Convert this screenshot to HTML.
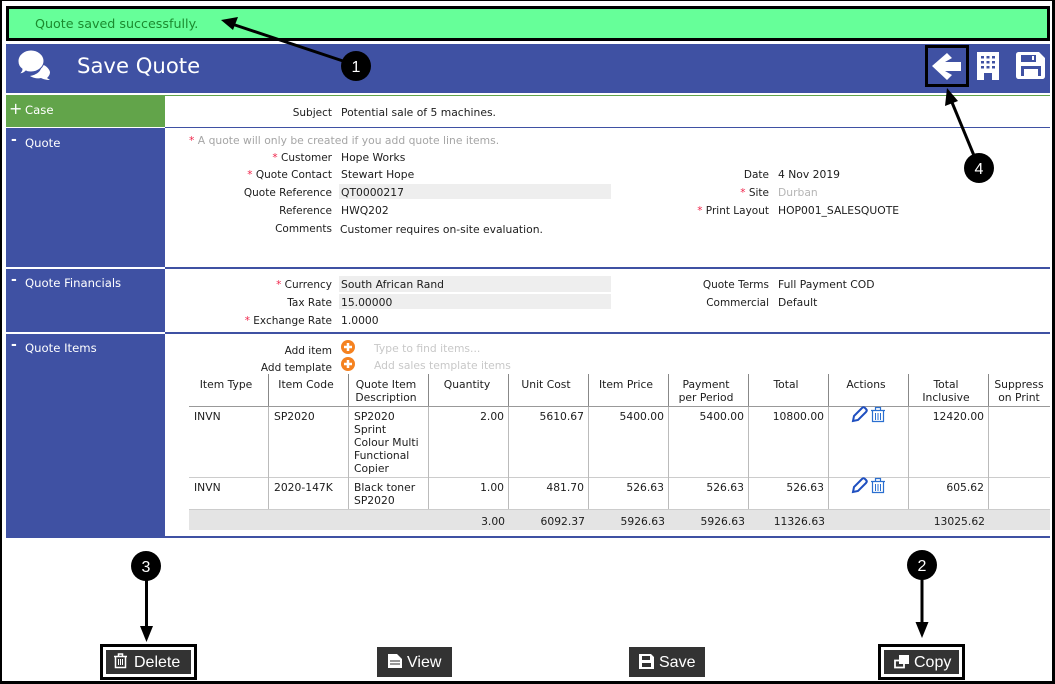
<!DOCTYPE html>
<html><head><meta charset="utf-8"><title>Save Quote</title>
<style>
html,body{margin:0;padding:0;background:#fff}
#p{position:relative;width:1055px;height:684px;overflow:hidden;background:#fff;font:10.75px/13px "DejaVu Sans",sans-serif;color:#1c1c1c}
#p div{position:absolute}
.t{white-space:nowrap}
.l{position:absolute;white-space:nowrap;text-align:right;width:300px;font-size:10.5px;margin-top:1px}
.l1{left:32px}
.l2{left:469px}
.v{position:absolute;white-space:nowrap}
.v1{left:341px}
.v2{left:778px}
.r{color:#f0244a}
.g{color:#b5b5b5}
.s{color:#fff;font-size:11.65px;white-space:nowrap}
.m{color:#fff;font-size:14px;font-weight:bold;white-space:nowrap}
.c{text-align:center;width:80px;white-space:nowrap}
.n{text-align:right;width:70px;white-space:nowrap}
.b{background:#333;color:#fff;font:16px/20px "Liberation Sans",sans-serif;white-space:nowrap}
</style></head><body><div id="p">
<div style="left:6px;top:6px;width:1038px;height:29px;background:#66ff99;border:3px solid #000"></div>
<div class="t" style="left:35px;top:17px;color:#1b8a2e;font-size:12.7px">Quote saved successfully.</div>
<div style="left:6px;top:44px;width:1044px;height:49px;background:#3f51a3"></div>
<div class="t" style="left:77px;top:53px;color:#fff;font-size:21.2px;line-height:26px">Save Quote</div>

<div style="left:6px;top:96px;width:159px;height:31px;background:#62a44a"></div>
<div style="left:6px;top:95px;width:1044px;height:1px;background:#62a44a"></div>
<div style="left:165px;top:127px;width:885px;height:1px;background:#3f51a3"></div>
<div style="left:6px;top:128px;width:159px;height:139px;background:#3f51a3"></div>
<div style="left:6px;top:267px;width:1044px;height:2px;background:#3f51a3"></div>
<div style="left:6px;top:269px;width:159px;height:63px;background:#3f51a3"></div>
<div style="left:6px;top:332px;width:1044px;height:2px;background:#3f51a3"></div>
<div style="left:6px;top:334px;width:159px;height:203px;background:#3f51a3"></div>
<div style="left:6px;top:536px;width:1044px;height:2px;background:#3f51a3"></div>
<div style="left:6px;top:267px;width:159px;height:2px;background:#fff"></div>
<div style="left:6px;top:332px;width:159px;height:2px;background:#fff"></div>

<div class="m" style="left:9px;top:102px;font-size:16px;font-weight:normal">+</div><div class="s" style="left:25px;top:104px">Case</div>
<div class="m" style="left:11px;top:134px">-</div><div class="s" style="left:25px;top:137px">Quote</div>
<div class="m" style="left:11px;top:274px">-</div><div class="s" style="left:25px;top:277px">Quote Financials</div>
<div class="m" style="left:11px;top:339px">-</div><div class="s" style="left:25px;top:342px">Quote Items</div>

<div style="left:339px;top:184px;width:272px;height:15px;background:#eee"></div>
<div style="left:339px;top:276px;width:272px;height:16px;background:#eee"></div>
<div style="left:339px;top:294px;width:272px;height:15px;background:#eee"></div>

<span class="l l1" style="top:106px">Subject</span><span class="v v1" style="top:106px">Potential sale of 5 machines.</span>
<span class="v" style="left:189px;top:134px;color:#a5a5a5"><span class="r">*</span> A quote will only be created if you add quote line items.</span>
<span class="l l1" style="top:151px"><span class="r">*</span> Customer</span><span class="v v1" style="top:151px">Hope Works</span>
<span class="l l1" style="top:168px"><span class="r">*</span> Quote Contact</span><span class="v v1" style="top:168px">Stewart Hope</span>
<span class="l l1" style="top:186px">Quote Reference</span><span class="v v1" style="top:186px">QT0000217</span>
<span class="l l1" style="top:204px">Reference</span><span class="v v1" style="top:204px">HWQ202</span>
<span class="l l1" style="top:222px">Comments</span><span class="v" style="left:340px;top:223px">Customer requires on-site evaluation.</span>
<span class="l l2" style="top:168px">Date</span><span class="v v2" style="top:168px">4 Nov 2019</span>
<span class="l l2" style="top:186px"><span class="r">*</span> Site</span><span class="v v2 g" style="top:186px">Durban</span>
<span class="l l2" style="top:204px"><span class="r">*</span> Print Layout</span><span class="v v2" style="top:204px">HOP001_SALESQUOTE</span>

<span class="l l1" style="top:278px"><span class="r">*</span> Currency</span><span class="v v1" style="top:278px">South African Rand</span>
<span class="l l1" style="top:296px">Tax Rate</span><span class="v v1" style="top:296px">15.00000</span>
<span class="l l1" style="top:314px"><span class="r">*</span> Exchange Rate</span><span class="v v1" style="top:314px">1.0000</span>
<span class="l l2" style="top:278px">Quote Terms</span><span class="v v2" style="top:278px">Full Payment COD</span>
<span class="l l2" style="top:296px">Commercial</span><span class="v v2" style="top:296px">Default</span>

<span class="l l1" style="top:344px">Add item</span><span class="l l1" style="top:361px">Add template</span>
<span class="v" style="left:374px;top:342px;color:#c8c8c8">Type to find items...</span>
<span class="v" style="left:374px;top:359px;color:#c8c8c8">Add sales template items</span>

<!-- table -->
<div style="left:189px;top:510px;width:861px;height:20px;background:#e4e4e4"></div>
<div style="left:189px;top:406px;width:861px;height:1px;background:#999"></div>
<div style="left:189px;top:477px;width:861px;height:1px;background:#ccc"></div>
<div style="left:189px;top:509px;width:861px;height:1px;background:#ccc"></div>
<div style="left:268px;top:374px;width:1px;height:32px;background:#888"></div><div style="left:268px;top:407px;width:1px;height:102px;background:#bbb"></div>
<div style="left:348px;top:374px;width:1px;height:32px;background:#888"></div><div style="left:348px;top:407px;width:1px;height:102px;background:#bbb"></div>
<div style="left:428px;top:374px;width:1px;height:32px;background:#888"></div><div style="left:428px;top:407px;width:1px;height:102px;background:#bbb"></div>
<div style="left:508px;top:374px;width:1px;height:32px;background:#888"></div><div style="left:508px;top:407px;width:1px;height:102px;background:#bbb"></div>
<div style="left:588px;top:374px;width:1px;height:32px;background:#888"></div><div style="left:588px;top:407px;width:1px;height:102px;background:#bbb"></div>
<div style="left:668px;top:374px;width:1px;height:32px;background:#888"></div><div style="left:668px;top:407px;width:1px;height:102px;background:#bbb"></div>
<div style="left:748px;top:374px;width:1px;height:32px;background:#888"></div><div style="left:748px;top:407px;width:1px;height:102px;background:#bbb"></div>
<div style="left:828px;top:374px;width:1px;height:32px;background:#888"></div><div style="left:828px;top:407px;width:1px;height:102px;background:#bbb"></div>
<div style="left:908px;top:374px;width:1px;height:32px;background:#888"></div><div style="left:908px;top:407px;width:1px;height:102px;background:#bbb"></div>
<div style="left:988px;top:374px;width:1px;height:32px;background:#888"></div><div style="left:988px;top:407px;width:1px;height:102px;background:#bbb"></div>

<div class="c" style="left:186px;top:378px">Item Type</div>
<div class="c" style="left:266px;top:378px">Item Code</div>
<div class="c" style="left:346px;top:378px">Quote Item<br>Description</div>
<div class="c" style="left:427px;top:378px">Quantity</div>
<div class="c" style="left:506px;top:378px">Unit Cost</div>
<div class="c" style="left:586px;top:378px">Item Price</div>
<div class="c" style="left:666px;top:378px">Payment<br>per Period</div>
<div class="c" style="left:746px;top:378px">Total</div>
<div class="c" style="left:826px;top:378px">Actions</div>
<div class="c" style="left:906px;top:378px">Total<br>Inclusive</div>
<div class="c" style="left:979px;top:378px">Suppress<br>on Print</div>

<div class="t" style="left:194px;top:410px">INVN</div>
<div class="t" style="left:274px;top:410px">SP2020</div>
<div class="t" style="left:354px;top:410px">SP2020<br>Sprint<br>Colour Multi<br>Functional<br>Copier</div>
<div class="n" style="left:434px;top:410px">2.00</div>
<div class="n" style="left:514px;top:410px">5610.67</div>
<div class="n" style="left:594px;top:410px">5400.00</div>
<div class="n" style="left:674px;top:410px">5400.00</div>
<div class="n" style="left:754px;top:410px">10800.00</div>
<div class="n" style="left:914px;top:410px">12420.00</div>

<div class="t" style="left:194px;top:481px">INVN</div>
<div class="t" style="left:274px;top:481px">2020-147K</div>
<div class="t" style="left:354px;top:481px">Black toner<br>SP2020</div>
<div class="n" style="left:434px;top:481px">1.00</div>
<div class="n" style="left:514px;top:481px">481.70</div>
<div class="n" style="left:594px;top:481px">526.63</div>
<div class="n" style="left:674px;top:481px">526.63</div>
<div class="n" style="left:754px;top:481px">526.63</div>
<div class="n" style="left:914px;top:481px">605.62</div>

<div class="n" style="left:435px;top:515px">3.00</div>
<div class="n" style="left:515px;top:515px">6092.37</div>
<div class="n" style="left:595px;top:515px">5926.63</div>
<div class="n" style="left:675px;top:515px">5926.63</div>
<div class="n" style="left:755px;top:515px">11326.63</div>
<div class="n" style="left:915px;top:515px">13025.62</div>

<!-- buttons -->
<div style="left:100px;top:644px;width:91px;height:30px;border:3px solid #000"></div>
<div style="left:878px;top:644px;width:81px;height:30px;border:3px solid #000"></div>
<div class="b" style="left:106px;top:650px;width:85px;height:24px"></div>
<div class="b" style="left:377px;top:647px;width:75px;height:30px"></div>
<div class="b" style="left:629px;top:647px;width:76px;height:30px"></div>
<div class="b" style="left:884px;top:650px;width:75px;height:24px"></div>
<div class="b" style="left:134px;top:653px;background:none">Delete</div>
<div class="b" style="left:407px;top:653px;background:none">View</div>
<div class="b" style="left:659px;top:653px;background:none">Save</div>
<div class="b" style="left:914px;top:653px;background:none">Copy</div>

<svg width="1055" height="684" viewBox="0 0 1055 684" style="position:absolute;left:0;top:0">
<!-- chat icon -->
<path d="M41 64c4 1 8 4 9 8 0 3-2 5-3 6l3 2c-4 0-7-1-9-2-3 1-8 0-11-2 6-1 13-5 11-12z" fill="#fff"/>
<path d="M31 50c7 0 13 5 13 11s-6 11-13 11c-2 0-4 0-5-1-2 2-4 3-7 3 2-2 3-3 3-5-3-2-4-5-4-8 0-6 6-11 13-11z" fill="#fff" stroke="#3f51a3" stroke-width="1"/>
<!-- back box -->
<rect x="926.500" y="46.500" width="41" height="39" fill="none" stroke="#000" stroke-width="3"/>
<path d="M932 66L947 53 952 58 945 62H961V71H945L952 75 947 80z" fill="#fff"/>
<!-- building -->
<path fill="#fff" fill-rule="evenodd" d="M977 52h22v28h-7v-7h-8v7h-7zM981 56v2.500h3v-2.500zM986.500 56v2.500h3v-2.500zM992 56v2.500h3v-2.500zM981 61v2.500h3v-2.500zM986.500 61v2.500h3v-2.500zM992 61v2.500h3v-2.500zM981 66v2.500h3v-2.500zM986.500 66v2.500h3v-2.500zM992 66v2.500h3v-2.500z"/>
<!-- save -->
<path fill="#fff" fill-rule="evenodd" d="M1019 52h20l6 6v18c0 2-1 3-3 3h-23c-2 0-3-1-3-3v-21c0-2 1-3 3-3zM1021 55v7h15v-7zM1032 56v4h2v-4zM1021 66v10h20v-10z"/>
<rect x="1024" y="69" width="14" height="7" fill="#fff"/>
<!-- orange plus -->
<circle cx="348" cy="347" r="7" fill="#f58220"/><path d="M344 347h8M348 343v8" stroke="#fff" stroke-width="2.500"/>
<circle cx="348" cy="364" r="7" fill="#f58220"/><path d="M344 364h8M348 360v8" stroke="#fff" stroke-width="2.500"/>
<!-- actions -->
<path d="M853 421l1-5 8-8c1-1 2-1 3 0l1 1c1 1 1 2 0 3l-8 8-5 1z" fill="none" stroke="#1f4fc0" stroke-width="2"/>
<path d="M871 410.500h14M872.500 411v10.500h11v-10.500M875.500 410v-2.500h5v2.500" fill="none" stroke="#2a6fd0" stroke-width="1.200"/>
<path d="M875.500 413v7M878 413v7M880.500 413v7" fill="none" stroke="#2a6fd0" stroke-width="1"/>
<path d="M853 492l1-5 8-8c1-1 2-1 3 0l1 1c1 1 1 2 0 3l-8 8-5 1z" fill="none" stroke="#1f4fc0" stroke-width="2"/>
<path d="M871 481.500h14M872.500 482v10.500h11v-10.500M875.500 481v-2.500h5v2.500" fill="none" stroke="#2a6fd0" stroke-width="1.200"/>
<path d="M875.500 484v7M878 484v7M880.500 484v7" fill="none" stroke="#2a6fd0" stroke-width="1"/>
<!-- button icons -->
<path d="M114 656.500h13M115.500 657v10.500h10v-10.500M118.500 656v-2h4v2" fill="none" stroke="#fff" stroke-width="1.500"/>
<path d="M118.500 659v6M120.500 659v6M122.500 659v6" stroke="#fff" stroke-width="1"/>
<path d="M388 654h9l5 5v9h-14z" fill="#fff"/><path d="M390 661h10M390 664h10" stroke="#333" stroke-width="1"/>
<path fill="#fff" fill-rule="evenodd" d="M639 654h12l3 3v12h-15zM642 656v4h8v-4zM642 663v4h9v-4z"/>
<path fill="none" stroke="#fff" stroke-width="1.800" d="M895 660.500h9v7h-9z"/><path fill="#fff" d="M899 655h10v9h-10z"/>
<!-- annotation arrows -->
<g stroke="#000" stroke-width="3" fill="#000">
<path d="M352 64L232 24"/>
<path d="M975 158L951 100"/>
<path d="M146.500 575V628"/>
<path d="M922 575V624"/>
</g>
<g fill="#000">
<path d="M221 20l17-3-5 13z"/>
<path d="M947 88l11 13-13 5z"/>
<path d="M146.500 642l-6.500-16h13z"/>
<path d="M922 638l-6.500-16h13z"/>
<circle cx="356" cy="66" r="15"/>
<circle cx="979" cy="168" r="15"/>
<circle cx="146" cy="566" r="15"/>
<circle cx="922" cy="565" r="15"/>
</g>
<g fill="#fff" font-family="Liberation Sans, sans-serif" font-size="16" text-anchor="middle">
<text x="356" y="72">1</text><text x="979" y="174">4</text><text x="146" y="572">3</text><text x="922" y="571">2</text>
</g>
<!-- outer border -->
<rect x="0" y="0" width="2" height="684" fill="#000"/>
<rect x="1052" y="0" width="3" height="684" fill="#000"/>
<rect x="0" y="681" width="1055" height="3" fill="#000"/>
<rect x="0" y="0" width="1055" height="1" fill="#000"/>
</svg>
</div></body></html>
